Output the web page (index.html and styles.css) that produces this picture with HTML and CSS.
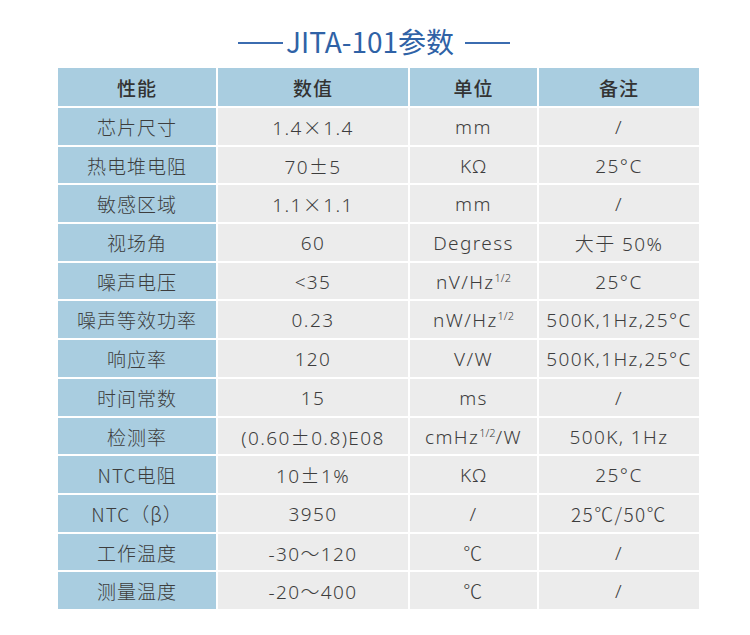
FILE: index.html
```html
<!DOCTYPE html>
<html lang="zh-CN">
<head>
<meta charset="utf-8">
<title>JITA-101参数</title>
<link rel="stylesheet" href="styles.css">
</head>
<body>
<div class="page">
  <h1 class="title"><span class="line"></span><span class="title-text">JITA-101参数</span><span class="line right"></span></h1>
  <div class="table">
    <div class="cell head">性能</div><div class="cell head">数值</div><div class="cell head">单位</div><div class="cell head">备注</div>

    <div class="cell name">芯片尺寸</div><div class="cell">1.4<span class="w">×</span>1.4</div><div class="cell">mm</div><div class="cell">/</div>
    <div class="cell name">热电堆电阻</div><div class="cell">70<span class="w">±</span>5</div><div class="cell">KΩ</div><div class="cell">25°C</div>
    <div class="cell name">敏感区域</div><div class="cell">1.1<span class="w">×</span>1.1</div><div class="cell">mm</div><div class="cell">/</div>
    <div class="cell name">视场角</div><div class="cell">60</div><div class="cell">Degress</div><div class="cell"><span class="w">大于</span> 50%</div>
    <div class="cell name">噪声电压</div><div class="cell">&lt;35</div><div class="cell">nV/Hz<sup>1/2</sup></div><div class="cell">25°C</div>
    <div class="cell name">噪声等效功率</div><div class="cell">0.23</div><div class="cell">nW/Hz<sup>1/2</sup></div><div class="cell">500K,1Hz,25°C</div>
    <div class="cell name">响应率</div><div class="cell">120</div><div class="cell">V/W</div><div class="cell">500K,1Hz,25°C</div>
    <div class="cell name">时间常数</div><div class="cell">15</div><div class="cell">ms</div><div class="cell">/</div>
    <div class="cell name">检测率</div><div class="cell">(0.60<span class="w">±</span>0.8)E08</div><div class="cell">cmHz<sup>1/2</sup>/W</div><div class="cell">500K, 1Hz</div>
    <div class="cell name">NTC电阻</div><div class="cell">10<span class="w">±</span>1%</div><div class="cell">KΩ</div><div class="cell">25°C</div>
    <div class="cell name">NTC（β）</div><div class="cell">3950</div><div class="cell">/</div><div class="cell"><span class="w">25℃/50℃</span></div>
    <div class="cell name">工作温度</div><div class="cell">-30<span class="w">～</span>120</div><div class="cell"><span class="w">℃</span></div><div class="cell">/</div>
    <div class="cell name">测量温度</div><div class="cell">-20<span class="w">～</span>400</div><div class="cell"><span class="w">℃</span></div><div class="cell">/</div>
  </div>
</div>
</body>
</html>
```

FILE: styles.css
```css
html, body {
  margin: 0;
  padding: 0;
  background: #ffffff;
}

body {
  font-family: "Noto Sans", "Noto Sans CJK SC", sans-serif;
  color: #3d3d3d;
}

.page {
  width: 750px;
  height: 635px;
  padding-top: 22px;
  box-sizing: border-box;
}

.title {
  margin: 0 0 9px 0;
  height: 37px;
  display: flex;
  align-items: center;
  justify-content: center;
  gap: 3px;
  font-size: 28px;
  font-weight: 400;
  color: #2f62a6;
  font-family: "Noto Sans CJK SC", "Noto Sans", sans-serif;
  padding-right: 2px;
}

.title .line {
  width: 45px;
  height: 2px;
  background: #3b6cb0;
  margin-top: 4px;
}

.title .line.right {
  margin-left: 8px;
}

.table {
  margin-left: 58px;
  width: 641px;
  display: grid;
  grid-template-columns: 158px 190px 127px 160px;
  grid-template-rows: 38px repeat(13, 36.7px);
  gap: 2px;
}

.cell {
  background: #ececec;
  text-align: center;
  line-height: 36.7px;
  font-size: 19px;
  font-weight: 300;
  letter-spacing: 1.4px;
  white-space: nowrap;
  padding-top: 1px;
  box-sizing: border-box;
}

.w {
  font-family: "Noto Sans CJK SC", sans-serif;
  font-weight: 300;
}

.cell.head {
  background: #a9cde0;
  line-height: 38px;
  font-weight: 500;
  letter-spacing: 1px;
  font-family: "Noto Sans CJK SC", "Noto Sans", sans-serif;
  color: #333;
}

.cell.name {
  background: #a9cde0;
  letter-spacing: 1px;
  font-family: "Noto Sans CJK SC", "Noto Sans", sans-serif;
  font-weight: 300;
}

sup {
  font-size: 11px;
  line-height: 0;
  vertical-align: 0;
  position: relative;
  top: -7px;
  letter-spacing: 0;
}
```
